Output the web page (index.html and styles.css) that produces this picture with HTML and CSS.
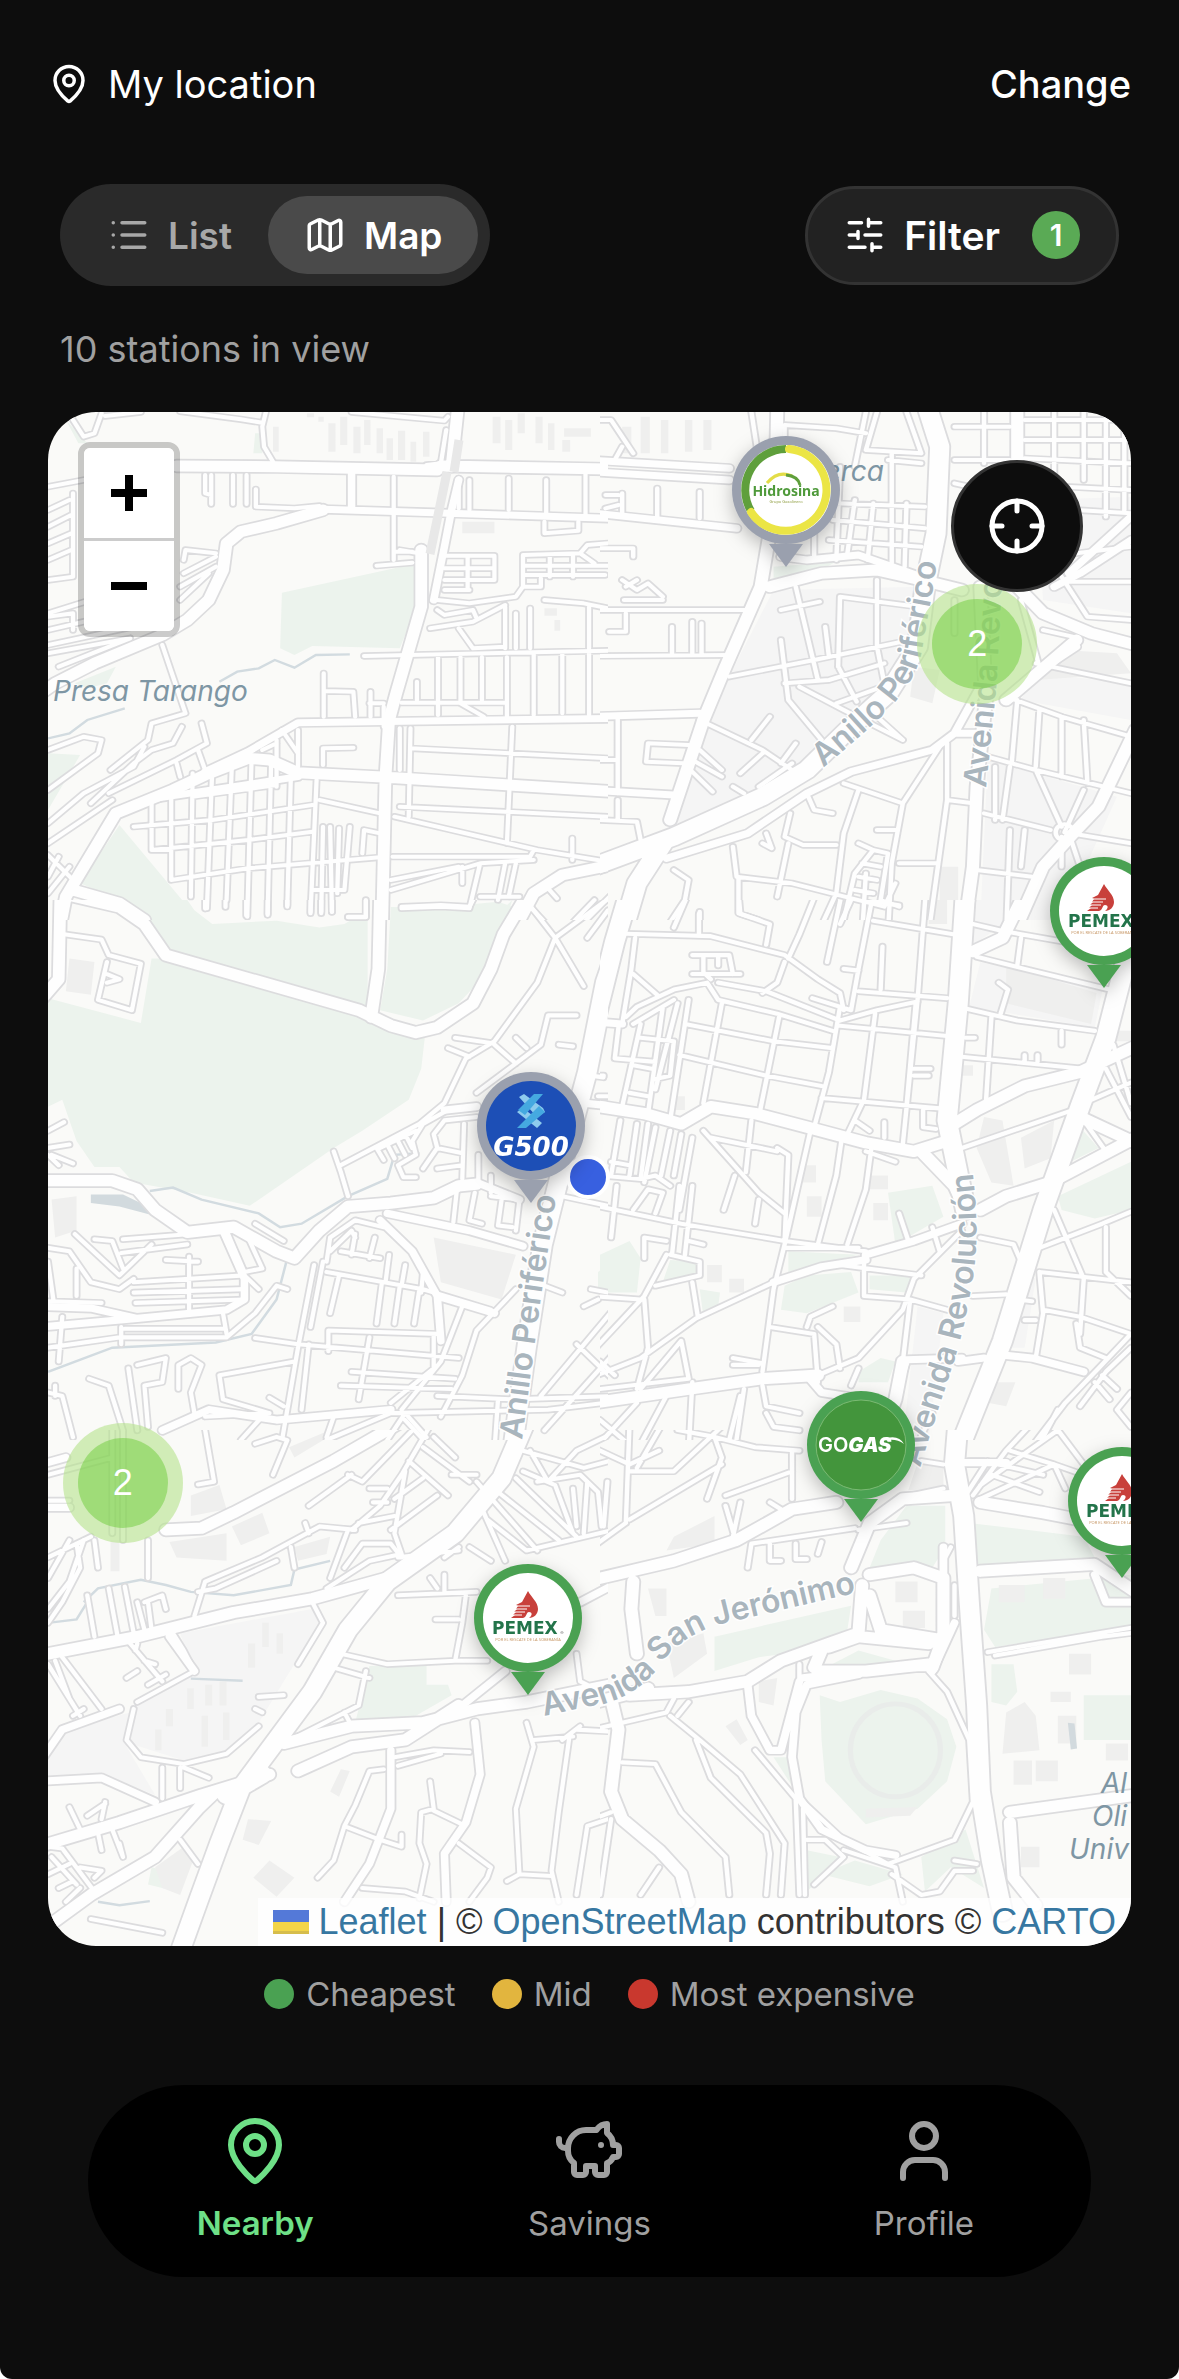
FILE: index.html
```
<!DOCTYPE html>
<html lang="en">
<head>
  <meta charset="UTF-8">
  <meta name="viewport" content="width=device-width, initial-scale=1.0">
  <title>Nearby stations</title>
  <link rel="stylesheet" href="styles.css">
</head>
<body>
  <header class="location-bar">
    <div class="location">
      <svg class="icon" viewBox="0 0 24 24"><path d="M20 10c0 4.993-5.539 10.193-7.399 11.799a1 1 0 0 1-1.202 0C9.539 20.193 4 14.993 4 10a8 8 0 0 1 16 0"/><circle cx="12" cy="10" r="3"/></svg>
      <span>My location</span>
    </div>
    <button class="change">Change</button>
  </header>

  <main>
    <div class="toolbar">
      <div class="segmented">
        <button class="segment">
          <svg class="icon" viewBox="0 0 24 24"><path d="M3 5h.01M3 12h.01M3 19h.01M8 5h13M8 12h13M8 19h13"/></svg>
          List
        </button>
        <button class="segment active">
          <svg class="icon" viewBox="0 0 24 24"><path d="M14.106 5.553a2 2 0 0 0 1.788 0l3.659-1.83A1 1 0 0 1 21 4.619v12.764a1 1 0 0 1-.553.894l-4.553 2.277a2 2 0 0 1-1.788 0l-4.212-2.106a2 2 0 0 0-1.788 0l-3.659 1.83A1 1 0 0 1 3 19.381V6.618a1 1 0 0 1 .553-.894l4.553-2.277a2 2 0 0 1 1.788 0zM15 5.764v15M9 3.236v15"/></svg>
          Map
        </button>
      </div>
      <button class="filter">
        <svg class="icon" viewBox="0 0 24 24"><path d="M10 5H3M12 19H3M14 3v4M16 17v4M21 12h-9M21 19h-5M21 5h-7M8 10v4M8 12H3"/></svg>
        Filter
        <span class="filter-count">1</span>
      </button>
    </div>
    <p class="count">10 stations in view</p>

    <div class="map">
      <svg class="map-canvas" viewBox="48 412 1083 1534">
        <defs>
          <!-- street network, one symbol per tile -->
          <symbol id="tile-1" viewBox="0 0 1568 1560" preserveAspectRatio="none">
            <path class="minor" d="M70 60L100 110 130 100 150 40 M160 48L260 36 M370 34L540 58 600 68 M610 36L600 80 605 140 630 185 M850 36L1110 62 1120 50 M1060 195L1100 190 1115 90 M440 225V280L457 285V310 M457 225V312 M518 225V312 M556 225V312 M582 268V320L690 325 760 318 M968 230V480 M920 497L1020 488 M985 450L1040 460 M968 455H1020 M1150 235V325 M1180 240V330 M1290 235V330 M1395 240V350 M1505 200V355 M1300 212H1568 M1110 467H1250V540H1170 M1110 505H1250 M1175 467V570 M1110 540H1180 M1110 570H1180 M1090 600L1180 610 1310 590 1330 560V465L1490 460 1510 435 1568 430 M1335 497H1568 M1335 525H1560 M1405 465V530 M1470 465V530 M1490 460L1530 490 M1335 560H1380V535 M1390 365V400L1485 392V365 M1390 600L1500 610 1568 625 M1515 620V745 M1350 625V745 M1310 640V745 M1280 620V745 M1070 685L1190 665 1280 615 M1090 630L1110 645 1190 630 1200 655 M1150 685L1190 745 1280 740 M885 768L1568 752 M1092 772V945 M1155 772V910 M1215 772V900 M1285 772V950 M1360 760V945 M1440 760V940 M1515 760V945 M1033 845V900 M990 908H1285 M1155 910L1220 950 M772 820V950 M775 873L855 875 860 950 M903 875V950 M900 910H940 M940 920V980 M1015 985L1010 1250 M985 985V1110 M1300 980L1285 1330 M1015 1045L1568 1075 M985 1220L1568 1250 M970 1250L1130 1290 1370 1350 1568 1385 M965 1370H1350L1360 1350 M1468 1315V1380 M700 990V1100 M770 1095V1045L855 1043 M640 1020V1160 M600 1050L640 1030 M655 990L700 1060 M290 1200V1350H340 M345 1195V1440 M405 1120L400 1490 M460 1105L445 1525 M515 1090L500 1500 M570 1075L558 1550 M625 1075L615 1545 M680 1130L670 1520 M752 1140L735 1540 M240 1280L460 1260 740 1215 M290 1350L560 1320 740 1295 M345 1440L560 1405 930 1372 M405 1190L640 1155 M760 1200L930 1240 M770 1280L765 1540 M790 1280L795 1535 M815 1285L810 1480 M845 1280L830 1470H745 M880 1360L885 1290 930 1300 M320 735L350 830 385 940 290 970 280 1020 175 1110 M120 1210L240 1090 290 1050 350 1030 375 980 M430 970L445 1030 360 1080 170 1180 M360 1090L370 1130 M420 1050L440 1110 M0 1270L100 1180 240 1100 270 1040 M0 1050L100 1010 150 1020 140 1060 0 1170 M0 1330L180 1200 M0 1365L80 1450 M0 1480L60 1400 M0 1430L30 1370 M0 260L100 240 M70 280V530L0 540 M0 330L60 300 M0 380L65 345 M0 430L65 400 M0 480L65 450 M0 640L120 600 M0 690L200 640 M0 735L240 680 M0 760L230 715 M30 800L230 715 M0 650L70 640V690 M380 480L385 450 470 460 M380 520L470 470 M370 560L470 500 M370 600L450 520 M960 1470L1210 1390 M960 1440L1150 1400 M1160 1400V1450 M990 1525L1100 1520 1180 1525 1210 1390 1360 1380 M1280 1390L1260 1500 M1310 1390L1290 1490 M1210 1490H1320 M840 1550H890V1500 M1400 1465L1425 1495 M1350 1520L1420 1600 M1470 1600L1600 1460 M1440 1600L1530 1500"/>
            <path class="street" d="M850 210V320 M1130 330L1110 440 1080 600 M770 328L1080 338 1600 356 M440 1115L560 1055 700 968 1600 955 M300 1195L520 1160 700 1130 M1150 240L1130 330"/>
            <path class="avenue" d="M360 198L640 200 1090 210 M1100 198L1600 208 M770 330L640 370 540 395 500 430 490 510 450 600 390 660 320 705 130 790 20 850 -20 880 M1150 0L1130 200 M1045 450V620L1010 750 975 880 955 960 945 1130 935 1600 M30 1600L50 1490 190 1240 350 1170 440 1125 560 1075 620 1080 700 1118 950 1132 1600 1176 M70 1470L200 1510 270 1560 M1600 1390L1440 1425 1360 1480 1300 1600"/>
          </symbol>
          <symbol id="tile-2" viewBox="0 0 1568 1560" preserveAspectRatio="none">
            <path class="minor" d="M0 60L30 60 90 160 M40 180L60 140 M15 285H50 M15 325L50 315 M155 265V350 M270 275V355 M60 280V340 M0 445H90V470 M60 540L100 570 130 550 170 590 M65 600H170 M70 560L100 540 M-20 630H410 M25 695H70V640 M195 680V760 M250 665V760 M275 670V760 M-20 768L360 765 M-20 1080H45 M48 950V1180 M48 1200V1260 M0 1260L100 1265 110 1320 M240 1035L130 1030 125 1085 225 1090 M270 1050L330 1110 M250 1080L330 1130 M245 1110L305 1175 M350 830L580 780 840 720 M500 850L620 840 770 790 M490 720L510 900 600 1020 M530 560L560 700 590 840 M490 630L595 605 M610 680L620 770 M750 540V740L770 850 M645 800L650 590 860 620 M645 800L695 905 M640 910L790 850 M540 860L660 930 820 1020 M270 960L440 1050 520 1110 M410 1020L460 950 M530 1030L490 1090 M360 1160L390 1180 M430 1160L520 1090 M380 1120L440 1060 M730 930L820 1020 M410 36L430 180 M500 75L640 85 720 100 M720 36L690 200 M750 36L720 150 870 160 M830 36L870 160 M640 310L880 320 M630 360L880 385 M620 420L870 440 M690 300L670 460 M740 310L725 480 M790 160V490 M830 310L825 500 M650 200L640 480 M580 400V470 M500 80V180 M780 180L870 190 M960 180H1110 M960 80H1110 M1040 36V190 M960 250L1000 260 M1150 60H1438 M1150 120H1438 M1150 175L1438 190 M1230 36V220 M1310 36V240 M1370 36V350 M1420 60V330 M1260 260L1438 270 M1290 330L1438 340 M1250 530L1320 650 1438 660 M1290 460L1438 440 M1270 545H1438 M1200 690L1280 710 M1140 600L1190 800 M960 600V700 M1180 790L1438 850 M1100 890L1250 950 1438 1010 M1130 900L1115 1090 M1190 930L1180 1100 M1250 950L1250 1130 M1310 960L1320 1150 M1050 1070L1180 1110 1438 1180 M1070 1100V1260 M1180 1110L1250 1280 M1040 1240L1220 1290 M1110 1100L1090 1260 M1110 1290L1100 1600 M1150 1290L1140 1400 M1020 1410L1170 1430 M1258 1297L1438 1330 M1258 1297L1310 1170 M1270 1300L1300 1400 1438 1420 M1250 1310V1400 M920 1040L820 1210 790 1390 780 1600 M660 1150L820 1210 M700 1170L660 1300 640 1480 590 1600 M560 1180L580 1230 630 1240 M515 1240L500 1310 550 1335H640 M510 1330L480 1490 M440 1330L465 1345 450 1300 M360 1340L370 1430 520 1450 770 1520 M375 1430V1540L430 1560 M200 1410L240 1440 230 1500 170 1600 M270 1535V1600 M750 1290H800 M700 1330L740 1350 690 1420 660 1560 M740 1350L780 1360 760 1500 M710 1390L760 1400 M700 1430L750 1440 M690 1470L740 1480 M810 1390H910 M940 1030L940 1200 890 1600 M940 1200L1010 1210 M720 1420L710 1600 M760 1500L810 1520 M800 1450L770 1520"/>
            <path class="street" d="M-30 180L350 205 M-30 215L350 240 M-30 338L370 385 M490 470L560 480 700 465 870 530 M-30 950L270 940 M-30 1170L200 1185 M180 1375L400 1300 560 1180 680 1115 900 1050 960 1000 1040 1000 M960 1000L1030 860 M1438 420L1300 520 1230 560 M1180 820L1290 740 M1438 350L1270 520"/>
            <path class="avenue" d="M480 30L475 300 435 560 340 800 280 960 190 1260 M460 560L600 520 750 510 870 540 980 570 M1130 0V560L1200 640 1330 700 1470 740 M1100 900L1290 720 M1450 990L1350 1220 1290 1290 1200 1400 1120 1600 M1030 560L1045 900 1020 1160 1010 1400 985 1600"/>
            <path class="highway" d="M880 0L920 140 910 400 880 560 860 740 780 880 680 980 560 1110 440 1190 200 1310 -30 1405 M170 1330L100 1450 60 1600"/>
            <circle class="minor" cx="1258" cy="1297" r="24"/>
          </symbol>
          <symbol id="tile-3" viewBox="0 0 1568 1568" preserveAspectRatio="none">
            <path class="minor" d="M50 100L150 115 170 160 260 185 235 320 140 290 165 180 M165 215L200 230 165 240 M440 -20V25 M497 -20V20 M555 -20V45 M615 -20V40 M670 -20V15 M735 -20V35 M765 -20V35 M795 -20V35 M840 50H890V0 M990 20L1100 15 1180 20 1200 -20 M1420 110L1330 -10 M1420 110L1500 250 M1590 -20L1420 110 1370 240 1250 410 1170 460 1110 590 1040 650 M1510 110L1568 30 M1140 400L1240 415 M1120 430L1180 455 M1250 420L1310 475 M1310 400L1340 430 M1200 560L1380 420 1400 335 1480 335 M1430 420L1470 425 M1040 650L820 770 M1030 670L930 720 M1000 680L1020 720 M980 700L1000 740 M950 710L970 750 M920 720L940 755 M800 730L820 790 840 860 M1200 600L1120 610 1050 650 1020 700 1030 740 980 770 995 805 1030 805 M1200 630L1110 640 1080 680 1090 720 1050 780 M1165 650L1160 810 M1090 720L1160 735 M1090 780L1160 770 M1205 740V820 M1240 800V850 M1145 840L1135 935 M1195 850L1180 930 1215 940 M1270 870L1260 945 1300 950 M1320 870L1310 960 M1240 860L1320 870 M1520 510L1555 515 M1540 570H1568 M0 670L45 645 M0 720L60 710 M10 740L70 765 M0 740L30 770 M75 970L200 1090 290 1000 M130 985L180 990 210 1070 M210 985L400 970 M205 1025L390 1000 M0 1010L60 1020 120 1110 200 1130 240 1100 M0 1050L15 1160 M80 1070V1150 M240 1110L550 1090 M240 1140L550 1130 M245 1170L550 1160 M395 1035V1190 M330 1045L420 1050 M0 1165L150 1170 M40 1210L30 1340 M205 1240V1290 M490 1200L500 1260 M215 1245H490 M0 1300L200 1270 500 1270 580 1200 640 1120 670 1130 M500 960L550 1080 600 1070 560 980 M580 940L660 990 M550 1090L590 1130 M790 1020L850 960 860 980 M860 970L850 1030 M915 980L900 1040 M820 1020L930 1040 M955 1030L945 1110 M1000 1060L990 1120 M1050 1080L1045 1140 M780 1080L1050 1130 1240 1190 M745 1060L700 1300 650 1600 M815 1090L790 1200 M770 1050L735 1240 M935 1110L920 1230 M985 1120L970 1230 M1040 1130L1025 1230 M580 1272L700 1290 1150 1330 M785 1310V1250L1090 1260 M730 1290L710 1480 M900 1270L870 1450 M850 1370L1140 1390 M820 1410L1130 1420 M1080 1260V1360L960 1460 M1160 1180L1100 1340 990 1480 M1310 1130L1200 1250 1160 1380 1100 1500 M1390 1120L1440 1140 M1380 1440L1590 1180 M1390 1540L1590 1310 M1480 1290L1590 1400 M1520 1130L1568 1140 M1500 1180L1540 1160 M1090 1440L1300 1450 1600 1440 M690 1340L480 1380 490 1450 620 1490 M440 1500L620 1490 M620 1445L660 1470 M115 1390L170 1410 210 1540 M250 1350L330 1330 320 1400 270 1410 280 1530 M225 1360L250 1540 M365 1420V1350L400 1330 430 1350 400 1430 410 1490 M0 1430L40 1440 70 1560 M20 1410V1440 M540 1568L600 1500 M780 1560L800 1500 M1250 1600L1260 1450 M950 1568L1000 1490 1060 1560 M1440 860L1600 895 M780 1050L790 980 860 930 940 950 M1000 1510L1080 1600 M780 1568L960 1490 1400 1480 1600 1455"/>
            <path class="street" d="M-20 1180L120 1185 250 1215 500 1190 550 1160 550 1100 490 960 M950 910L1180 960 1330 1005 M930 930L1020 1020 1090 1150 1100 1280 M1090 1150L1250 1200 M320 1540L450 1480 640 1510 960 1480 M-20 1240L250 1215 M1200 600L1110 610 M1500 590L1600 600 M1320 870L1200 820"/>
            <path class="avenue" d="M35 -30L30 230 -20 290 M55 -15L200 20 270 70 330 160 870 320 960 365 1030 385 1090 370 1190 300 1240 200 1275 100 1350 -30 M930 -30L925 200 905 340 M-20 815L180 815 250 840 300 900 390 965 520 950 640 1020 690 1040 760 960 840 890 960 880 1080 865 1150 830 1200 825"/>
            <path class="highway" d="M1640 0L1560 240 1510 500 1450 730 1385 1000 1340 1300 1300 1600"/>
          </symbol>
          <symbol id="tile-4" viewBox="0 0 1568 1568" preserveAspectRatio="none">
            <path class="minor" d="M240 -20L200 80 M268 40V100 M375 -20L380 40 460 70 450 130 M585 -20L540 100 510 170 M655 -20L615 180 M680 0L650 70 M765 135L760 260 M740 -20L700 200 680 320 M740 60L960 100 M882 -20L860 290 820 710 M720 0L810 15 M660 200L700 205 M70 98L300 105 500 160 590 230 650 270 660 320 M95 110L85 200 M250 160H350L360 215 M280 160V210L300 230 M250 215H380 M320 160V190 M90 215L160 280 M85 200L60 360 M70 340L100 310 200 260 290 240 320 290 M320 240L450 265 650 350 M200 290L90 360 M500 180L480 240 440 270 M320 290L480 330 630 380 M575 285L680 320 M700 265L940 285 M650 350L750 320 860 295 M650 365L940 395 M230 360L470 410 630 430 M215 450L450 510 600 540 M240 290L190 640 M330 300L280 590 M485 340L430 630 M650 310L620 500 580 660 M745 330L715 580 M855 300L830 600 M600 575L920 605 M850 490H895 M850 510H890 M710 590L670 680 M690 640L730 670 M770 645V690 M875 610V660L910 665 M110 360L60 600 M170 310L130 620 M110 400L200 410 190 510 150 520 M50 370L40 460 150 470 M90 480L140 490 M80 560L130 570 M210 300L150 550 M0 510H10 M55 640L30 800 M100 650L80 800 M130 650L110 810 M150 660L120 820 M190 670L165 800 M220 680L200 800 M250 690L215 900 M0 800L110 810 150 800 190 830 M30 760L80 770 M45 830L30 980 M90 900L130 840 170 850 150 910 M215 830L195 1030 M250 830L230 1030 M120 980L180 990 M120 980V1040 M240 990L280 1000 M280 670L430 850 500 910 M300 690L480 730 M410 640L395 790 M480 720L510 740 500 990 M365 800L335 900 M430 870L420 940 M570 670L500 1000 470 1130 440 1370 M655 690L640 800 590 1000 M735 720L720 840 670 1000 M720 730L800 760 M-20 886L220 940 500 990 720 1020 M500 1010L700 1010 M190 1030L270 1050 270 1090 150 1120 M-20 1150L110 1160 M180 1030L120 1150 -20 1310 M250 1110L265 1210 M490 1100L260 1215 110 1330 -20 1385 M0 1340L40 1380 M120 1160L130 1300 100 1420 M110 1420L220 1280 240 1390 M650 1060L870 1090 M715 1030V1150L840 1160 940 1190 M980 960L850 1100 820 1190 700 1330 590 1380 M840 1160L820 1340 M900 950L920 1020 M810 910L835 990 M460 1240L580 1260 590 1400 M560 1240L570 1210 630 1180 M590 1240L640 1290 650 1360 M360 1330L440 1345 M360 1350H430 M250 1400L240 1600 M0 1420L240 1390 M390 1420L365 1600 M440 1410L450 1470 540 1490 M450 1490L470 1530 540 1540 M380 1440L350 1568 M100 1460L-20 1600 M180 1440L100 1600 M0 1510L100 1600 M1010 70L1090 90 1438 155 M1140 110L1130 190 M1020 165L1150 200 1380 260 M1080 240L1105 260 1085 330 M990 315L1130 350 1340 380 M1060 340L1045 590 M990 400H1015 M980 455L1310 490 M1150 450V470 M1185 450V470 M1250 380V420 M1390 420L1438 590 M1310 590L1438 530 M1370 490L1438 630 M1310 640L1370 730 M980 720L1280 610 M1030 980L1120 1000 1140 1050 M1010 1150L1100 1145 M1130 1160L1170 1165 M1230 900L1310 1100 1300 1260 M1190 1010L1360 940 1438 905 M1370 950V1080L1438 1150 M1190 1080L1438 1110 M1190 1080L1200 1200 1180 1330 M1200 1190L1300 1210 1438 1260 M1180 1220H1150 M1290 1230L1300 1300 1370 1330 M1438 1260L1350 1360 1260 1460 1160 1600 M1438 1300L1370 1370 1300 1470 M1360 1380L1400 1420 M1340 1400L1380 1450 M1438 1430L1400 1480 1438 1530 M1180 1600L1240 1480 M850 1600L900 1490 M700 1360L680 1410"/>
            <path class="street" d="M720 1030L850 990 980 940 M470 1110L600 1065 720 1045 M970 1340L1040 1330 M1080 1320L1170 1330 1310 1370 M980 1330L830 1335 800 1430 M560 1380L600 1430 720 1450 M0 355L60 360"/>
            <path class="avenue" d="M-30 595L120 620 220 650 300 600 420 620 580 665 720 705 850 730 940 700 M-30 1462L240 1420 440 1390 590 1380 M870 730L960 830 990 900 M960 650L1020 610 1150 540 1300 500 1450 425 M1030 900L1100 860 1220 820 1450 690 M1300 630L1450 705 M1155 -30L1090 110 1010 150 M820 1340L800 1450 750 1600"/>
            <path class="highway" d="M990 -30L970 300 940 640 990 900 M1430 150L1370 400 1300 600 1200 900 1090 1280 970 1600 M-30 420L40 120 90 -60"/>
          </symbol>
          <symbol id="tile-5" viewBox="0 0 1568 1568" preserveAspectRatio="none">
            <path class="minor" d="M0 130L180 80 M180 0V300 M210 0V320 M0 205H60 M280 320V430 M130 320L140 400 M100 320L60 440 0 520 M80 330L90 400 40 500 0 560 M0 370L120 310 M0 430L60 320 M110 480L130 600 M170 460L195 600 M215 455L240 590 M250 500L270 580 M270 500L320 480 330 520 M280 500L290 580 M435 -30L465 150 420 158 M580 40L640 20 670 30 630 130 M850 290L930 220 990 130 1080 -30 M440 440L600 370 760 280 860 290 M420 470L470 460 640 380 M440 440L410 540 M730 220L850 130 M840 130L880 150 1040 -20 M680 340L690 400 M720 270L730 300 M840 290L790 430 M780 460L900 380 990 360 M830 400L880 330 960 330 990 370 M870 270L970 250 M900 170H950 M910 210H950 M970 200L1050 140 M960 290L1090 190 M1000 120L970 300 990 360 M1010 90L1120 190 M1050 50L1180 150 M1080 20L1140 80 M1130 130H1200 M980 370L1150 350 M1150 340L1110 370 M1180 340L1240 380 M1220 240L1280 380 M1230 260L1340 350 1600 286 M1200 150L1370 350 M1260 180L1430 320 M1310 140L1370 200 1480 310 M1330 120L1420 160 1470 300 M1370 150L1490 130 1540 180 1550 280 M1510 150L1500 300 M1470 170L1480 280 M1330 60L1500 110 1590 85 M1350 60L1400 150 1480 60 1600 0 M1070 430L1090 460 M1110 420V470 M980 480L1200 470 M1170 480L1160 560 1140 670 M1085 550H1150 M820 650L950 680 1140 670 1230 670 M800 690L900 720 M890 700L870 800 680 900 M850 860L830 820 M590 775L660 770 M600 820L580 810 M740 500L770 560 700 680 M350 590L380 640 410 700 250 790 M230 620L320 730 M245 640L250 620 M220 720L250 700 M280 740L330 710 M270 670L300 680 M40 660L150 810 M0 680L90 830 M20 670L60 780 M70 830L100 810 M240 810L220 900 260 950 380 970 500 940 590 860 M320 980V1070 M370 980V1040 M380 980L450 1010 M60 1095L90 1160 M110 1120L160 1085 M160 1080L150 1130 M140 1170L150 1220 M180 1160L210 1240 200 1200 M10 1240L80 1320 M0 1290L60 1260 M30 1330L70 1310 M50 1370L90 1330 M90 1270L150 1280 130 1300 M0 1210L40 1215 130 1340 M370 1190L420 1260 M970 950L1080 930 1180 935 M980 975L1100 940 M940 985L900 990 860 1090 830 1150 800 1250 755 1300 M830 1150L930 1190 990 1210V1175 M1070 1020L1080 1100 1045 1110 1040 1200 1060 1260 1040 1360 M1080 1105L1160 1145 M1150 1200L1240 1270 1230 1300 1180 1370 M1340 850L1360 920 1310 1100 1320 1290 1410 1295 M1320 1290L1285 1310 M1360 900L1470 890 M1460 890L1430 1110 1410 1280 1430 1370 M1490 860L1440 900 M1480 870L1568 875 M1568 1130L1510 1150 1480 1350 M880 1330L1000 1340 1080 1370 M120 1420L320 1460 M1480 650L1490 730 1510 740"/>
            <path class="street" d="M-20 225H60 M960 930L960 1100 900 1260 830 1370 M1195 850L1210 1000 1170 1140 1110 1230 1115 1370 M1160 800L1280 700 M-20 960L40 870 200 810 M-20 1020L150 1010 300 1080 M340 600L410 700 M880 445L780 480 M1490 500L1600 440 M-20 100L50 80"/>
            <path class="avenue" d="M330 290L430 285 520 240 800 90 1000 -30 M-20 654L250 600 520 530 740 490 950 430 M-20 1208L200 1140 430 1060 620 1000 M-20 1456L120 1350 300 1240 420 1100 470 1050 M660 910L850 860 1050 850 1200 810 1340 790 1600 735 M700 990L850 920 1000 900 1150 800"/>
            <path class="highway" d="M1340 -30L1270 140 1140 300 950 440 840 580 740 760 640 900 540 1040 480 1200 420 1370 340 1600 M600 1000L500 1060"/>
          </symbol>
          <symbol id="tile-6" viewBox="0 0 1568 1568" preserveAspectRatio="none">
            <path class="minor" d="M-20 50L80 100 160 60 M80 -20L70 270 M80 120L200 120 340 -20 M170 -20L100 110 M210 0L310 20 420 50 540 60 M310 20L330 80 290 200 M330 100L80 260 M520 60V200 M340 190L520 120 M20 150L10 280 M70 270L-20 340 M340 220L370 330 M380 210L360 310 M460 210L490 230 M400 400L410 330 690 285 M460 330V380H490 M530 330V375H560 M600 325L590 360 M700 290L830 270 M1050 90L990 190 M1040 90H1000 M1010 190L1100 60 1170 -20 M1030 160L1240 0 M1030 200L1230 100 1310 130 M1060 130L1190 180 M1110 60L1230 100 1260 170 M1080 100L1200 130 M1240 0L1310 100 M870 90L930 100 M840 190L930 170 M1050 645L1450 572 M1070 655L1360 600 1450 588 M960 450V540 M950 340L930 380 M540 680V750 M590 680L600 720 M-20 870L180 820 200 780 M210 830L240 790 M190 830L270 900 380 1000 470 1150 500 1200 490 1350 M260 900L300 1010 450 1170 460 1230 450 1350 M60 965L150 970 190 1050 220 1110 340 1240 350 1350 M160 1270L110 1350 M420 930L530 1070 540 1350 M550 1080L660 1190 780 1260 960 1190 1010 1080 1000 900 940 760 890 700 M560 1190L610 1190 660 1240 580 1320 M660 1220L800 1270 820 1370 M790 1290L870 1350 920 1340 960 1280 1010 1280 M960 1250L1020 1260 M550 1100L555 1350 M30 1130L0 1350 M-20 1130L30 1110"/>
            <path class="street" d="M700 710L560 740 530 820 520 950 540 1070 600 1160 720 1220 800 1235 M400 740L410 830 460 930 490 930 540 730 M550 720L700 700 840 690 900 690 M900 700L960 560 M1340 420L1370 500 1450 500 M930 420V340 M960 95H1100"/>
            <path class="avenue" d="M-30 438L200 380 370 320 520 230 640 210 M130 750L100 760 -30 795 M90 440L85 520 100 650 M30 780L50 870 30 1050 60 1130 160 1220 220 1290 240 1370 M80 770L240 760 400 730 490 670 620 620 700 590 710 450 M680 400L730 270 820 200 960 190 M730 420L850 400 930 430 930 600 900 690 M730 480L760 580 930 610 M620 630L700 600 890 620 M590 700L720 700 890 680 M600 640L580 690 M1030 410L1338 390 1450 470 M1030 210L1200 240 1450 292 M1110 1110L1450 1060 M1110 1140L1120 1300 1180 1380"/>
            <path class="highway" d="M970 -30L960 100 985 250 1000 500 1020 800 1030 1050 1060 1250 1090 1400"/>
          </symbol>
          <path id="line-periferico-n" d="M823 768C880 720 915 690 922 650C928 610 935 590 943 510"/>
          <path id="line-revolucion-n" d="M986 788L996 690L1010 440"/>
          <path id="line-periferico-s" d="M522 1440L542 1290L566 1130"/>
          <path id="line-revolucion-s" d="M920 1468C940 1400 960 1350 967 1310C975 1270 985 1230 963 1110"/>
          <path id="line-jeronimo" d="M544 1716L610 1702Q645 1690 665 1658Q690 1630 730 1622L910 1580"/>
        </defs>

        <!-- parks, buildings and water -->
        <svg x="48" y="400" width="560" height="520" viewBox="0 0 1568 1560" preserveAspectRatio="none">
          <path class="park" d="M655 578L1025 492V640L985 745 740 738 690 765 650 745zM200 1275L430 1570 350 1570 90 1450zM0 1060L90 1065 0 1230zM190 800L165 850 110 865 75 850zM580 100H600V160H575zM965 1535L1260 1505 1300 1520 1270 1570H965zM50 60L110 130 85 130z"/>
          <path class="building" d="M725 40h20v12h-20zM757 50h15v15h-15zM785 70h20v85h-20zM818 50h20v85h-20zM855 80h20v80h-20zM885 60h18v75h-18zM920 85h18v75h-18zM948 115h18v65h-18zM980 92h20v88h-20zM1015 125h16v60h-16zM1050 95h18v75h-18zM630 80h16v75h-16zM1245 50h22v80h-22zM1280 60h20v90h-20zM1315 40h20v60h-20zM1365 50h20v80h-20zM1400 70h18v80h-18zM1445 85h75v25h-75zM1440 120h22v35h-22zM1160 365h90v35h-90zM1390 625h35v22h-35zM1418 660h16v32h-16z"/>
          <path class="water" d="M480 845L530 815 590 805 635 780 690 803 750 765 845 763M0 1015L60 1000 110 960 215 925"/>
        </svg>
        <svg x="600" y="400" width="579" height="520" viewBox="0 0 1568 1560" preserveAspectRatio="none">
          <path class="district" d="M470 570L870 560 840 740 700 950 480 1180 190 1280 340 850zM1180 300L1438 290V640L1200 600zM1180 820L1438 850V960L1140 900zM1050 1080L1400 1190 1250 1560H1030z"/>
          <path class="park" d="M470 500L640 485 560 530 470 540z"/>
          <path class="building" d="M60 80h25v80h-25zM110 50h25v110h-25zM165 60h20v100h-20zM230 60h20v95h-20zM280 60h22v90h-22zM1180 840L1250 750 1400 760 1438 820zM850 800L920 810 900 910 840 890zM920 1400h50v100h-50z"/>
        </svg>
        <svg x="48" y="900" width="560" height="540" viewBox="0 0 1568 1568" preserveAspectRatio="none">
          <path class="park" d="M330 170L870 330 1055 400 1045 490 1010 580 880 670 800 720 565 888 400 850 240 820 200 775 130 775 80 700 40 580 0 600V285L260 357 290 170zM240 0H390L410 30 460 70 640 60 760 80 830 70 895 30V310L330 150 270 60zM960 20L1190 25 1250 50 1300 0 1240 200 1150 300 1050 350 930 320 950 200zM1540 1080L1568 1060V1130H1540z"/>
          <path class="building" d="M60 170L130 180 120 275 50 265zM1080 980L1310 1030 1270 1160 1100 1110zM10 870L80 860V960L20 980z"/>
          <path class="pond" d="M120 855L210 855 280 890 290 915 200 890 120 880z"/>
          <path class="water" d="M285 845L350 835 430 870 590 910 650 950 710 940 840 860 950 810 970 740 1040 735M0 1370L180 1300 470 1285 570 1260 640 1160 670 1040"/>
        </svg>
        <svg x="600" y="900" width="579" height="540" viewBox="0 0 1568 1568" preserveAspectRatio="none">
          <path class="park" d="M1240 860L1438 760V900L1340 925 1250 900zM1300 660L1350 720 1275 760zM500 1120L560 1090 680 1080 700 1140 560 1200 490 1190zM0 1030L80 990 110 1040 100 1140 0 1140zM730 1090H850L830 1140 730 1130zM510 1020L700 1030 600 1055 510 1080zM780 850L900 830 930 920 800 1000zM700 1370L760 1330 800 1340 780 1400H700zM190 1045L260 1050 260 1090 170 1110zM270 1130L325 1140 320 1180 280 1210z"/>
          <path class="district" d="M1030 180L1360 265 1340 370 1000 310zM980 0H1140L1080 80 1010 130zM1120 1060L1180 1100 1150 1300H1100zM1180 920L1220 930 1200 1000zM860 1180L930 1200 890 1568H820z"/>
          <path class="building" d="M1100 190L1345 270 1330 360 1100 300zM1040 630L1090 640 1120 830 1060 820 1020 720zM1140 690L1230 640 1220 750 1150 780zM1060 1400L1125 1400 1100 1470 1050 1460zM540 770h45v50h-45zM560 860h40v60h-40zM730 800h50v40h-50zM740 880h40v50h-40zM290 1060h40v50h-40zM350 1100h40v40h-40zM660 1180h45v45h-45zM980 480h30v30h-30zM890 0h50v70h-50zM200 570h30v40h-30zM1380 380H1438V410H1380z"/>
        </svg>
        <svg x="48" y="1430" width="560" height="540" viewBox="0 0 1568 1568" preserveAspectRatio="none">
          <path class="district" d="M370 590L740 520 760 560 590 850 500 940 380 960 230 910 250 800 410 710zM0 930L50 870 230 820 220 920 300 1060 150 1000 0 1020z"/>
          <path class="park" d="M900 685L1060 680 1060 740 1120 740 1130 770 1030 830 860 850zM290 1270L370 1290 360 1340 280 1320z"/>
          <path class="building" d="M400 190L480 160 500 230 400 250zM515 280L600 240 620 300 540 335zM675 50L790 0 770 30 690 80zM340 325L500 300 500 380 360 370zM690 340L790 310 780 360 700 380zM620 1250L690 1300 640 1355 575 1300zM560 1130L625 1135 590 1205 545 1190zM820 985L845 990 815 1065 790 1050zM300 1270L380 1210 410 1240 370 1350 320 1330zM440 740h20v60h-20zM480 730h20v70h-20zM390 750h18v60h-18zM330 810h20v50h-20zM560 620h20v70h-20zM600 560h18v70h-18zM640 590h18v60h-18zM300 870h18v60h-18zM430 830h18v90h-18zM490 820h18v80h-18zM175 320h25v90h-25z"/>
          <path class="water" d="M100 500L140 460 260 435 330 450 400 470 520 480 680 450 690 405 790 380M400 722L545 728M140 1370L200 1380 285 1368M0 560L80 550 110 500"/>
        </svg>
        <svg x="600" y="1430" width="579" height="540" viewBox="0 0 1568 1568" preserveAspectRatio="none">
          <path class="park" d="M830 220H935V340L900 400 730 400 760 320zM1000 270L1310 310 1340 370 1020 400zM1060 460L1438 420V570L1070 630 1040 580zM310 600L680 510 670 580 570 640 430 660 310 700zM610 690L700 640 800 670 700 690 600 710zM1060 680L1120 680 1130 760 1100 800 1060 790zM1310 770H1438V900H1310zM560 1220L650 1240 600 1300 560 1340zM600 1290L690 1250 820 1290 730 1325zM870 1240L990 1160 1040 1330 950 1270 880 1340zM470 950H510L530 1050z"/>
          <path class="park" d="M595 770L650 790 760 755 860 780 940 840 965 920 940 1020 860 1100 720 1145 680 1100 610 1020 600 900z"/>
          <path class="building" d="M860 95L930 90V175H835zM130 460H180V540H150zM200 310L310 250V330L180 350zM180 620L280 590 290 650 200 720zM800 440h60v60h-60zM820 525h60v50h-60zM1080 450h70v50h-70zM1200 430h60v60h-60zM1100 820L1150 790 1180 830 1190 930 1090 940zM1220 760h55v30h-55zM1240 830h50v80h-50zM1120 960h50v70h-50zM1180 960h60v60h-60zM1370 910h60v50h-60zM1270 650h60v60h-60zM720 1100L860 1095 840 1120 720 1125zM430 730L480 720 470 800 430 790zM340 860L370 840 400 900 380 915zM1140 1210h50v60h-50z"/>
          <path class="pond" d="M1267 850L1285 852 1292 925 1275 928z"/>
          <ellipse class="track" cx="800" cy="930" rx="122" ry="135"/>
        </svg>

        <g class="road-edges">
          <use href="#tile-1" x="48" y="400" width="560" height="520"/>
          <use href="#tile-2" x="600" y="400" width="579" height="520"/>
          <use href="#tile-3" x="48" y="900" width="560" height="540"/>
          <use href="#tile-4" x="600" y="900" width="579" height="540"/>
          <use href="#tile-5" x="48" y="1430" width="560" height="540"/>
          <use href="#tile-6" x="600" y="1430" width="579" height="540"/>
        </g>
        <g class="roads">
          <use href="#tile-1" x="48" y="400" width="560" height="520"/>
          <use href="#tile-2" x="600" y="400" width="579" height="520"/>
          <use href="#tile-3" x="48" y="900" width="560" height="540"/>
          <use href="#tile-4" x="600" y="900" width="579" height="540"/>
          <use href="#tile-5" x="48" y="1430" width="560" height="540"/>
          <use href="#tile-6" x="600" y="1430" width="579" height="540"/>
        </g>
        <path class="runway" d="M459 440L454 472M447 472L430 554"/>

        <g class="place-names">
          <text x="53" y="701">Presa Tarango</text>
          <text x="884" y="481" text-anchor="end">Alberca</text>
          <text x="1101" y="1793">Al</text>
          <text x="1092" y="1826">Oli</text>
          <text x="1069" y="1859">Univ</text>
        </g>
        <g class="road-names">
          <text><textPath href="#line-periferico-n">Anillo Periférico</textPath></text>
          <text><textPath href="#line-revolucion-n">Avenida Revolución</textPath></text>
          <text><textPath href="#line-periferico-s">Anillo Periférico</textPath></text>
          <text><textPath href="#line-revolucion-s">Avenida Revolución</textPath></text>
          <text><textPath href="#line-jeronimo">Avenida San Jerónimo</textPath></text>
        </g>
      </svg>

      <div class="user-dot"></div>
      <button class="cluster cluster-north"><span>2</span></button>
      <button class="cluster cluster-west"><span>2</span></button>

      <button class="pin pin-hidrosina" aria-label="Hidrosina">
        <svg viewBox="0 0 108 132">
          <path class="pin-tip" d="M37 108h34L54 131z"/><circle class="pin-ring" cx="54" cy="54" r="54"/>
          <circle cx="54" cy="54" r="45" fill="#fff"/>
          <path d="M54 13A41 41 0 0 0 19 75" fill="none" stroke="#5f9f3c" stroke-width="8"/>
          <path d="M57 13A41 41 0 1 1 19 76" fill="none" stroke="#ebe545" stroke-width="8" stroke-linecap="round"/>
          <path d="M35 47Q46 34 60 40" fill="none" stroke="#e3dd48" stroke-width="3"/>
          <path d="M54 39Q66 40 68 49" fill="none" stroke="#5f9f3c" stroke-width="3"/>
          <text class="logo-hidrosina" x="54" y="60">Hidrosina</text>
          <text class="logo-caption" x="54" y="67" fill="#8b9a3a">Grupo Gasolinero</text>
        </svg>
      </button>
      <button class="pin pin-g500" aria-label="G500">
        <svg viewBox="0 0 108 132">
          <path class="pin-tip" d="M37 108h34L54 131z"/><circle class="pin-ring" cx="54" cy="54" r="54"/>
          <circle cx="54" cy="54" r="45" fill="#1d4fb6"/>
          <path d="M42 25l5-3 19 14 2 4-8 5zM40 40l6-4 19 15-5 5z" fill="#8ecbed"/>
          <path d="M57 22h9L48 43l-7-5zM62 34l6 6-19 16h-9z" fill="#45a9e0"/>
          <text class="logo-g500" x="54" y="84">G500</text>
        </svg>
      </button>
      <button class="pin best pin-gogas" aria-label="GOGAS">
        <svg viewBox="0 0 108 132">
          <path class="pin-tip" d="M37 108h34L54 131z"/><circle class="pin-ring" cx="54" cy="54" r="54"/>
          <circle cx="54" cy="54" r="45" fill="#43953c" stroke="#7cba74"/>
          <text class="logo-gogas" x="11" y="61">GO<tspan>GAS</tspan></text>
          <path d="M80 47Q92 44 97 53Q90 48 82 49" fill="#fff"/>
        </svg>
      </button>
      <button class="pin best pin-pemex-north" aria-label="Pemex">
        <svg viewBox="0 0 108 132">
          <g id="pemex">
            <path class="pin-tip" d="M37 108h34L54 131z"/><circle class="pin-ring" cx="54" cy="54" r="54"/>
            <circle cx="54" cy="54" r="45" fill="#fff"/>
            <path d="M54 27c3 6 10 11 10 18 0 5-4 9-9 9 4-3 3-6 0-6-3 0-2 5-6 6H37l4-3h-2l3-3h-2l3-3h-1l2-3-2-1 6-3z" fill="#c8403b"/>
            <path d="M42 42h14M41 45h12M40 48h11M39 51h9" stroke="#fff"/>
            <text class="logo-pemex" x="18" y="70">PEMEX</text>
            <text class="logo-caption" x="88" y="70" fill="#555">®</text>
            <text class="logo-caption" x="54" y="77" fill="#c99a6a">POR EL RESCATE DE LA SOBERANÍA</text>
          </g>
        </svg>
      </button>
      <button class="pin best pin-pemex-east" aria-label="Pemex"><svg viewBox="0 0 108 132"><use href="#pemex"/></svg></button>
      <button class="pin best pin-pemex-south" aria-label="Pemex"><svg viewBox="0 0 108 132"><use href="#pemex"/></svg></button>

      <div class="zoom">
        <button aria-label="Zoom in"><svg viewBox="0 0 36 36"><path d="M18 0v36M0 18h36"/></svg></button>
        <button aria-label="Zoom out"><svg viewBox="0 0 36 36"><path d="M0 18h36"/></svg></button>
      </div>
      <button class="locate" aria-label="Center on my location">
        <svg class="icon" viewBox="0 0 24 24"><circle cx="12" cy="12" r="10"/><path d="M22 12h-4M6 12H2M12 6V2M12 22v-4"/></svg>
      </button>
      <div class="attribution">
        <svg class="flag" viewBox="0 0 12 8"><path fill="#5479d8" d="M0 0h12v4H0z"/><path fill="#f3d548" d="M0 4h12v3H0z"/><path fill="#d6bd4c" d="M0 7h12v1H0z"/></svg>
        <a href="#">Leaflet</a> | © <a href="#">OpenStreetMap</a> contributors © <a href="#">CARTO</a>
      </div>
    </div>

    <ul class="legend">
      <li><span class="dot cheapest"></span>Cheapest</li>
      <li><span class="dot mid"></span>Mid</li>
      <li><span class="dot expensive"></span>Most expensive</li>
    </ul>
  </main>

  <nav class="tab-bar">
    <a class="tab active" href="#">
      <svg class="icon" viewBox="0 0 24 24"><path d="M20 10c0 4.993-5.539 10.193-7.399 11.799a1 1 0 0 1-1.202 0C9.539 20.193 4 14.993 4 10a8 8 0 0 1 16 0"/><circle cx="12" cy="10" r="3"/></svg>
      Nearby
    </a>
    <a class="tab" href="#">
      <svg class="icon" viewBox="0 0 24 24"><path d="M11 17h3v2a1 1 0 0 0 1 1h2a1 1 0 0 0 1-1v-3a3.16 3.16 0 0 0 2-2h1a1 1 0 0 0 1-1v-2a1 1 0 0 0-1-1h-1a5 5 0 0 0-2-4V3a4 4 0 0 0-3.2 1.6l-.3.4H11a6 6 0 0 0-6 6v1a5 5 0 0 0 2 4v3a1 1 0 0 0 1 1h2a1 1 0 0 0 1-1zM16 10h.01M2 8v1a2 2 0 0 0 2 2h1"/></svg>
      Savings
    </a>
    <a class="tab" href="#">
      <svg class="icon" viewBox="0 0 24 24"><path d="M19 21v-2a4 4 0 0 0-4-4H9a4 4 0 0 0-4 4v2"/><circle cx="12" cy="7" r="4"/></svg>
      Profile
    </a>
  </nav>
</body>
</html>
```
FILE: styles.css
```
* {
  box-sizing: border-box;
}
html {
  background: #fff;
}
body {
  margin: 0;
  min-height: 100vh;
  background: #0d0d0d;
  border-radius: 0 0 12px 12px;
  color: #fff;
  font-family: Inter, sans-serif;
}
button {
  margin: 0;
  padding: 0;
  border: 0;
  background: none;
  color: inherit;
  font: inherit;
  cursor: pointer;
}
.icon {
  width: 42px;
  height: 42px;
  flex: none;
  fill: none;
  stroke: currentColor;
  stroke-width: 2;
  stroke-linecap: round;
  stroke-linejoin: round;
}

/* top */
.location-bar {
  display: flex;
  justify-content: space-between;
  align-items: center;
  padding: 60px 48px 0;
  font-size: 38px;
  line-height: 48px;
}
.location {
  display: flex;
  align-items: center;
  gap: 18px;
}
.change {
  font-weight: 500;
}
.toolbar {
  display: flex;
  justify-content: space-between;
  align-items: center;
  margin-top: 76px;
  padding: 0 60px;
}
.segmented {
  display: flex;
  padding: 12px;
  border-radius: 51px;
  background: #2a2a2a;
}
.segment {
  display: flex;
  align-items: center;
  gap: 18px;
  height: 78px;
  padding: 0 36px;
  border-radius: 39px;
  color: #a8a8a8;
  font-size: 37px;
  font-weight: 600;
}
.segment.active {
  background: #4a4a4a;
  color: #fff;
}
.filter {
  display: flex;
  align-items: center;
  gap: 18px;
  height: 99px;
  padding: 0 36px;
  border: 3px solid #333;
  border-radius: 50px;
  background: #222;
  font-size: 39px;
  font-weight: 600;
}
.filter-count {
  width: 48px;
  margin-left: 14px;
  border-radius: 24px;
  background: #5aaa55;
  font-size: 30px;
  line-height: 48px;
}
.count {
  margin: 39px 60px;
  color: #a0a0a0;
  font-size: 36px;
  line-height: 48px;
}

/* map */
.map {
  position: relative;
  margin: 0 48px;
  aspect-ratio: 1083 / 1534;
  border-radius: 48px;
  background: #fafaf8;
  overflow: hidden;
}
.map-canvas {
  display: block;
  width: 100%;
  height: 100%;
}
.park {
  fill: #ecf3ed;
}
.building {
  fill: #efefee;
}
.district {
  fill: #f5f5f5;
}
.pond {
  fill: #d2dade;
}
.water {
  fill: none;
  stroke: #d2dbe0;
  stroke-width: 7;
}
.track {
  fill: none;
  stroke: #e9ecea;
  stroke-width: 14;
}
.runway {
  fill: none;
  stroke: #e8e8e8;
  stroke-width: 9;
}
.road-edges {
  --edge: 10px;
  stroke: #dcdcde;
}
.roads {
  --edge: 0px;
  stroke: #fefefe;
}
.minor, .street, .avenue, .highway {
  fill: none;
  stroke-linecap: round;
  stroke-linejoin: round;
}
.minor {
  stroke-width: calc(12px + var(--edge));
}
.street {
  stroke-width: calc(21px + var(--edge));
}
.avenue {
  stroke-width: calc(33px + var(--edge));
}
.highway {
  stroke-width: calc(52px + var(--edge));
}
.place-names {
  fill: #7e96a4;
  font-size: 28px;
  font-style: italic;
}
.road-names {
  fill: #a9b5bd;
  stroke: #fefefe;
  stroke-width: 3;
  paint-order: stroke;
  font-size: 32px;
  font-weight: 600;
}

/* things on the map, placed by percent of the map box */
.user-dot, .cluster, .pin {
  position: absolute;
  transform: translate(-50%, -50%);
}
.user-dot {
  left: 49.9%;
  top: 49.9%;
  width: 44px;
  height: 44px;
  border: 4px solid #fff;
  border-radius: 50%;
  background: #3860e0;
}
.cluster {
  width: 120px;
  height: 120px;
  padding: 15px;
  border-radius: 50%;
  background: rgba(181, 226, 140, 0.6);
  color: #fff;
  font-family: "Liberation Sans", Arial, sans-serif;
  font-size: 36px;
  line-height: 90px;
}
.cluster span {
  display: block;
  border-radius: 50%;
  background: rgba(110, 204, 57, 0.5);
}
.cluster-north {
  left: 85.8%;
  top: 15.1%;
}
.cluster-west {
  left: 6.9%;
  top: 69.8%;
}
.pin {
  width: 108px;
  height: 132px;
  --price: #9aa0ae;
  transform: translate(-50%, -100%);
}
.pin svg {
  display: block;
  overflow: visible;
  filter: drop-shadow(0 6px 9px rgba(0, 0, 0, 0.25));
}
.pin.best {
  --price: #4aa152;
}
.pin-ring, .pin-tip {
  fill: var(--price);
}
.pin-hidrosina {
  left: 68.1%;
  top: 10.2%;
}
.pin-g500 {
  left: 44.6%;
  top: 51.6%;
}
.pin-gogas {
  left: 75.1%;
  top: 72.4%;
}
.pin-pemex-north {
  left: 97.5%;
  top: 37.6%;
}
.pin-pemex-east {
  left: 99.2%;
  top: 76.1%;
}
.pin-pemex-south {
  left: 44.3%;
  top: 83.7%;
}
.logo-pemex {
  fill: #23744a;
  font: bold 17px "DejaVu Sans", sans-serif;
}
.logo-caption {
  font: 4px "Noto Sans", sans-serif;
  text-anchor: middle;
}
.logo-hidrosina {
  fill: #4f9a3b;
  font: bold 14px "Noto Sans", sans-serif;
  text-anchor: middle;
}
.logo-g500 {
  fill: #fff;
  font: italic bold 26px "DejaVu Sans", sans-serif;
  text-anchor: middle;
}
.logo-gogas {
  fill: #fff;
  font: 600 20px Inter, sans-serif;
}
.logo-gogas tspan {
  font-style: italic;
  font-weight: 900;
}
.zoom {
  position: absolute;
  left: 30px;
  top: 30px;
  width: 102px;
  border: 6px solid rgba(0, 0, 0, 0.2);
  border-radius: 12px;
  background-clip: padding-box;
}
.zoom button {
  display: grid;
  place-items: center;
  width: 90px;
  height: 90px;
  background: #fff;
  border-radius: 0 0 6px 6px;
}
.zoom button:first-child {
  height: 93px;
  border-bottom: 3px solid #ccc;
  border-radius: 6px 6px 0 0;
}
.zoom svg {
  width: 36px;
  stroke: #000;
  stroke-width: 8;
}
.locate {
  position: absolute;
  top: 48px;
  right: 48px;
  display: grid;
  place-items: center;
  width: 132px;
  height: 132px;
  border: 3px solid #333;
  border-radius: 50%;
  background: #0d0d0d;
}
.locate .icon {
  width: 60px;
  height: 60px;
}
.attribution {
  position: absolute;
  right: 0;
  bottom: 0;
  padding: 0 15px;
  background: rgba(255, 255, 255, 0.8);
  color: #333;
  font-family: "Liberation Sans", Arial, sans-serif;
  font-size: 36px;
  line-height: 48px;
  white-space: nowrap;
}
.attribution a {
  color: #3777a1;
  text-decoration: none;
}
.flag {
  width: 36px;
  height: 24px;
}

/* bottom */
.legend {
  display: flex;
  justify-content: center;
  gap: 36px;
  margin: 24px 0 0;
  padding: 0;
  list-style: none;
  color: #a0a0a0;
  font-size: 33px;
  line-height: 48px;
}
.legend li {
  display: flex;
  align-items: center;
  gap: 12px;
}
.dot {
  width: 30px;
  height: 30px;
  border-radius: 50%;
}
.cheapest {
  background: #4aa152;
}
.mid {
  background: #e2b53e;
}
.expensive {
  background: #c9382e;
}
.tab-bar {
  display: flex;
  margin: 67px 88px 0;
  padding: 30px 0;
  border-radius: 96px;
  background: #000;
}
.tab {
  display: flex;
  flex: 1;
  flex-direction: column;
  align-items: center;
  gap: 12px;
  color: #a0a0a0;
  font-size: 33px;
  line-height: 48px;
  text-decoration: none;
}
.tab .icon {
  width: 72px;
  height: 72px;
}
.tab.active {
  color: #6ee087;
  font-weight: 600;
}
```
